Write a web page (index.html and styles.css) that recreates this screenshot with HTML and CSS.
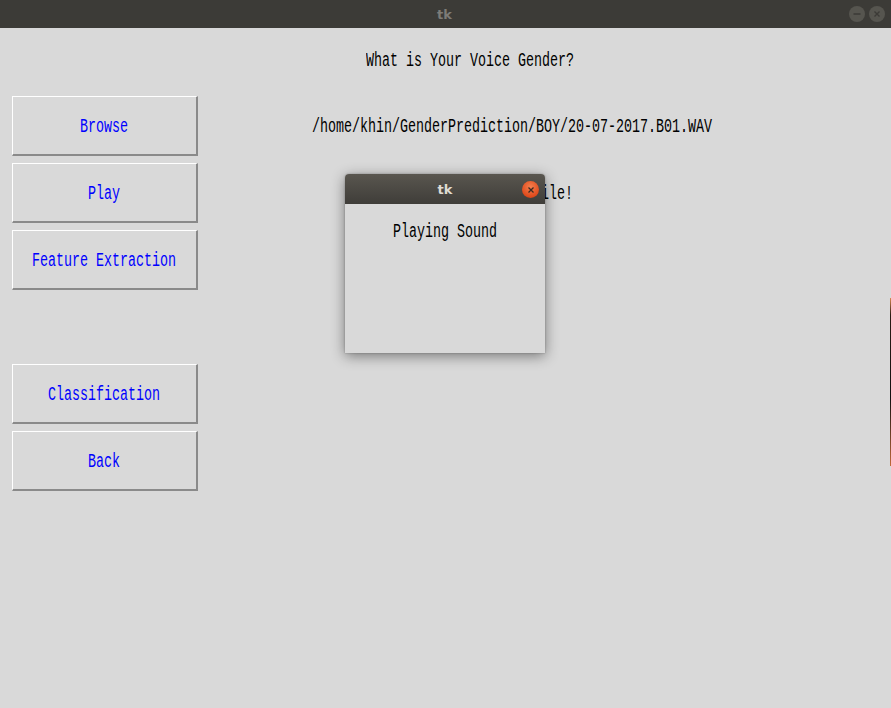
FILE: index.html
```html
<!DOCTYPE html>
<html>
<head>
<meta charset="utf-8">
<link rel="stylesheet" href="styles.css">
</head>
<body>
<div class="window">
  <header class="titlebar">
    <span class="title">tk</span>
    <div class="controls">
      <span class="ctl"><svg width="16" height="16" viewBox="0 0 16 16"><line x1="4.5" y1="8" x2="11.5" y2="8" stroke="#3c3b37" stroke-width="1.6"/></svg></span>
      <span class="ctl"><svg width="16" height="16" viewBox="0 0 16 16"><path d="M5.5 5.5 L10.5 10.5 M10.5 5.5 L5.5 10.5" stroke="#3c3b37" stroke-width="1.4"/></svg></span>
    </div>
  </header>
  <main class="grid">
    <div class="cell r0 right"><span class="txt heading">What is Your Voice Gender?</span></div>
    <div class="cell r1 btncell"><button class="btn"><span class="txt c">Browse</span></button></div>
    <div class="cell r1 right"><span class="txt path">/home/khin/GenderPrediction/BOY/20-07-2017.B01.WAV</span></div>
    <div class="cell r2 btncell"><button class="btn"><span class="txt c">Play</span></button></div>
    <div class="cell r2 right"><span class="txt status">You have selected file!</span></div>
    <div class="cell r3 btncell"><button class="btn"><span class="txt c">Feature Extraction</span></button></div>
    <div class="cell r4"></div>
    <div class="cell r5 btncell"><button class="btn"><span class="txt c">Classification</span></button></div>
    <div class="cell r6 btncell"><button class="btn"><span class="txt c">Back</span></button></div>
  </main>
  <div class="edge"></div>
  <section class="dialog">
    <div class="dtitle">
      <span class="dtk">tk</span>
      <span class="dclose"><svg width="10" height="10" viewBox="0 0 10 10"><path d="M2.5 2.5 L7.5 7.5 M7.5 2.5 L2.5 7.5" stroke="#3a2a22" stroke-width="1.3"/></svg></span>
    </div>
    <div class="dbody"><span class="txt c">Playing Sound</span></div>
  </section>
</div>
</body>
</html>
```
FILE: styles.css
```css
* { box-sizing: border-box; }
html, body { margin: 0; padding: 0; }
body { width: 891px; height: 708px; background: #d9d9d9; overflow: hidden; }
.window { position: relative; width: 891px; height: 708px; background: #d9d9d9; }
.titlebar {
  height: 28px; background: #3c3b37; display: flex; align-items: center; justify-content: center;
  position: relative;
}
.title { font-family: "DejaVu Sans", sans-serif; font-weight: bold; font-size: 13px; color: #7d7c77; margin-left: -2px; }
.controls { position: absolute; right: 6px; top: 6px; display: flex; gap: 4px; }
.ctl { width: 16px; height: 16px; border-radius: 50%; background: #56554f; display: flex; }
.grid {
  display: grid;
  grid-template-columns: 12px 186px 1fr;
  grid-template-rows: 64px repeat(6, 67px);
}
.cell { display: flex; align-items: center; }
.btncell { align-items: flex-start; padding-top: 4px; }
.r0 { grid-row: 1; } .r1 { grid-row: 2; } .r2 { grid-row: 3; } .r3 { grid-row: 4; }
.r4 { grid-row: 5; } .r5 { grid-row: 6; } .r6 { grid-row: 7; }
.btncell { grid-column: 2; }
.right { grid-column: 3; }
.btn {
  width: 186px; height: 60px; margin: 0; padding: 2px 0 0 0;
  background: #d9d9d9;
  border-style: solid; border-width: 1px 2px 2px 1px;
  border-color: #ffffff #8a8a8a #8a8a8a #ffffff;
  color: #0000ff; display: flex; align-items: center; justify-content: center;
}
.txt {
  display: inline-block; font-family: "Liberation Mono", "Courier New", monospace;
  font-size: 20px; line-height: 20px; white-space: pre;
  transform: scaleX(0.6667); transform-origin: left center;
}
.txt.c { transform-origin: center center; }
.heading { margin-left: 168px; margin-top: 2px; color: #000; }
.path { margin-left: 114px; color: #000; margin-top: 3px; }
.status { margin-left: 191px; color: #000; margin-top: 2px; }
.edge {
  position: absolute; right: 0; top: 298px; width: 1px; height: 168px;
  background: linear-gradient(#d98a50, #2a1c14 10%, #111 60%, #c06a3a);
}
.dialog {
  position: absolute; left: 345px; top: 174px; width: 200px; height: 179px;
  background: #d9d9d9; border-radius: 4px 4px 0 0;
  box-shadow: 0 3px 14px rgba(0,0,0,0.45), 0 0 2px rgba(0,0,0,0.3);
}
.dtitle {
  height: 30px; border-radius: 4px 4px 0 0;
  background: linear-gradient(#59564f, #3f3d39);
  display: flex; align-items: center; justify-content: center; position: relative;
}
.dtk { font-family: "DejaVu Sans", sans-serif; font-weight: bold; font-size: 13px; color: #dfdbd2; }
.dclose {
  position: absolute; left: 177px; top: 7px; width: 17px; height: 17px; border-radius: 50%;
  background: radial-gradient(circle at 50% 35%, #f4804f, #df4a1c 70%, #b83d18);
  display: flex; align-items: center; justify-content: center;
}
.dbody { display: flex; justify-content: center; padding-top: 18px; color: #000; }
```
